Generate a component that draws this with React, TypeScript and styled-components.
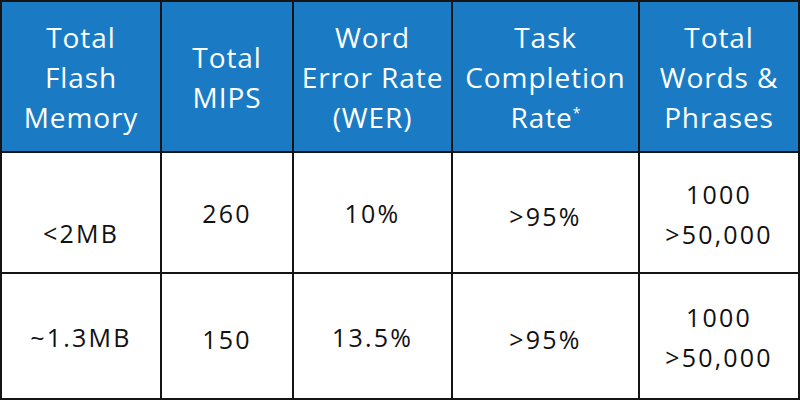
import React from "react";
import styled, { createGlobalStyle } from "styled-components";

const Global = createGlobalStyle`
  html, body { margin: 0; padding: 0; background: #ffffff; }
  body { font-family: "Open Sans", "Lato", sans-serif; }
`;

const Grid = styled.div`
  width: 800px;
  height: 400px;
  box-sizing: border-box;
  display: grid;
  grid-template-columns: 158px 130px 157px 185px 158px;
  grid-template-rows: 149px 119px 124px;
  gap: 2px;
  padding: 2px;
  background: #141414;
`;

const HeadCell = styled.div`
  background: #1a7bc4;
  color: #ffffff;
  font-size: 28px;
  letter-spacing: 0.9px;
  line-height: 40px;
  font-weight: 500;
  display: flex;
  align-items: center;
  justify-content: center;
  text-align: center;
  white-space: pre-line;
`;

const BodyCell = styled.div<{ $shift?: number }>`
  background: #ffffff;
  color: #111111;
  font-size: 25px;
  letter-spacing: 2.2px;
  line-height: 40px;
  display: flex;
  align-items: center;
  justify-content: center;
  text-align: center;
  white-space: pre-line;
  padding-top: ${(p) => p.$shift ?? 0}px;
`;

const Star = styled.span`
  display: inline-block;
  font-size: 14px;
  letter-spacing: 0;
  line-height: 14px;
  transform: translateY(-10px);
`;

const headers: React.ReactNode[] = [
  "Total\nFlash\nMemory",
  "Total\nMIPS",
  "Word\nError Rate\n(WER)",
  <>
    {"Task\nCompletion\nRate"}
    <Star>*</Star>
  </>,
  "Total\nWords &\nPhrases",
];

const rows: { text: string; shift?: number }[][] = [
  [
    { text: "<2MB", shift: 40 },
    { text: "260", shift: 0 },
    { text: "10%", shift: 0 },
    { text: ">95%", shift: 6 },
    { text: "1000\n>50,000", shift: 2 },
  ],
  [
    { text: "~1.3MB", shift: 2 },
    { text: "150", shift: 6 },
    { text: "13.5%", shift: 2 },
    { text: ">95%", shift: 6 },
    { text: "1000\n>50,000", shift: 2 },
  ],
];

export default function App() {
  return (
    <>
      <Global />
      <Grid>
        {headers.map((h, i) => (
          <HeadCell key={`h${i}`}>
            <span>{h}</span>
          </HeadCell>
        ))}
        {rows.map((r, ri) =>
          r.map((c, ci) => (
            <BodyCell key={`r${ri}c${ci}`} $shift={c.shift}>
              {c.text}
            </BodyCell>
          ))
        )}
      </Grid>
    </>
  );
}
